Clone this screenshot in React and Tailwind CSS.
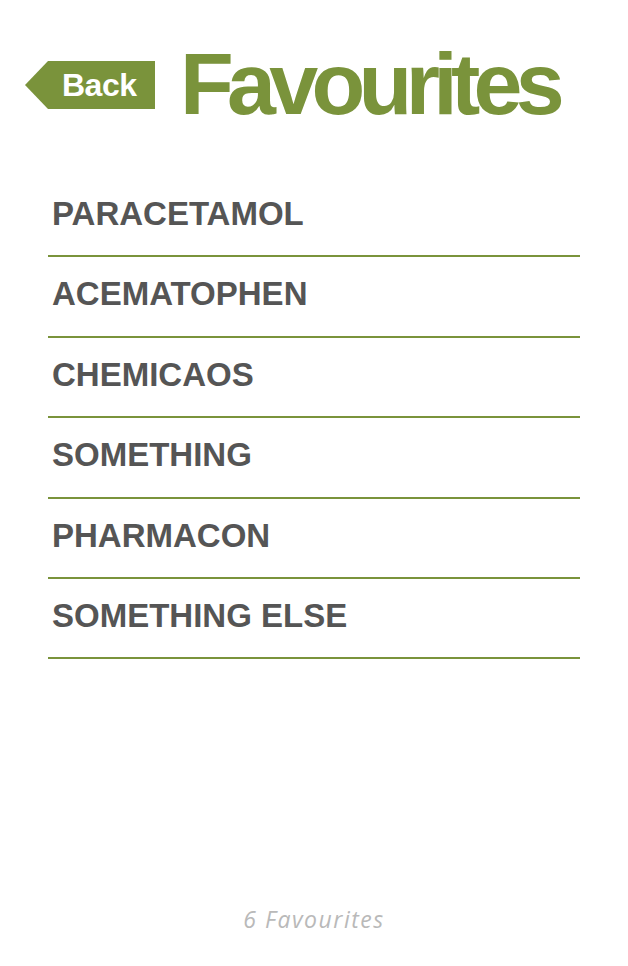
const items = [
  'PARACETAMOL',
  'ACEMATOPHEN',
  'CHEMICAOS',
  'SOMETHING',
  'PHARMACON',
  'SOMETHING ELSE',
];

function BackButton() {
  return (
    <button className="flex h-[48px] items-stretch">
      <svg width="23" height="48" viewBox="0 0 23 48" className="block">
        <polygon points="23,0 23,48 0,24" fill="#7a933b" />
      </svg>
      <span
        className="flex w-[107px] items-center bg-[#7a933b] pl-[14px] text-[32px] font-bold leading-none tracking-[-0.5px] text-white"
        style={{ fontFamily: '"Liberation Sans", Arial, sans-serif' }}
      >
        Back
      </span>
    </button>
  );
}

export default function App() {
  return (
    <div
      className="flex min-h-[966px] w-[628px] flex-col bg-white"
      style={{ fontFamily: '"Liberation Sans", Arial, sans-serif' }}
    >
      <header className="flex items-start pl-[25px] pt-[40px]">
        <div className="mt-[21px]">
          <BackButton />
        </div>
        <h1 className="ml-[25px] text-[88px] font-bold leading-none tracking-[-6.7px] text-[#7a933b]">
          Favourites
        </h1>
      </header>

      <ul className="mx-[48px] mt-[49px] flex-1">
        {items.map((name) => (
          <li
            key={name}
            className="box-border h-[80.4px] border-b-2 border-[#7a933b] pl-[4px] pt-[20px] text-[33px] font-bold leading-[33px] text-[#555555]"
          >
            {name}
          </li>
        ))}
      </ul>

      <footer
        className="pb-[32px] text-center text-[23px] italic leading-[30px] tracking-[1.5px] text-[#b9b9b9]"
        style={{ fontFamily: '"Open Sans", sans-serif' }}
      >
        6 Favourites
      </footer>
    </div>
  );
}
